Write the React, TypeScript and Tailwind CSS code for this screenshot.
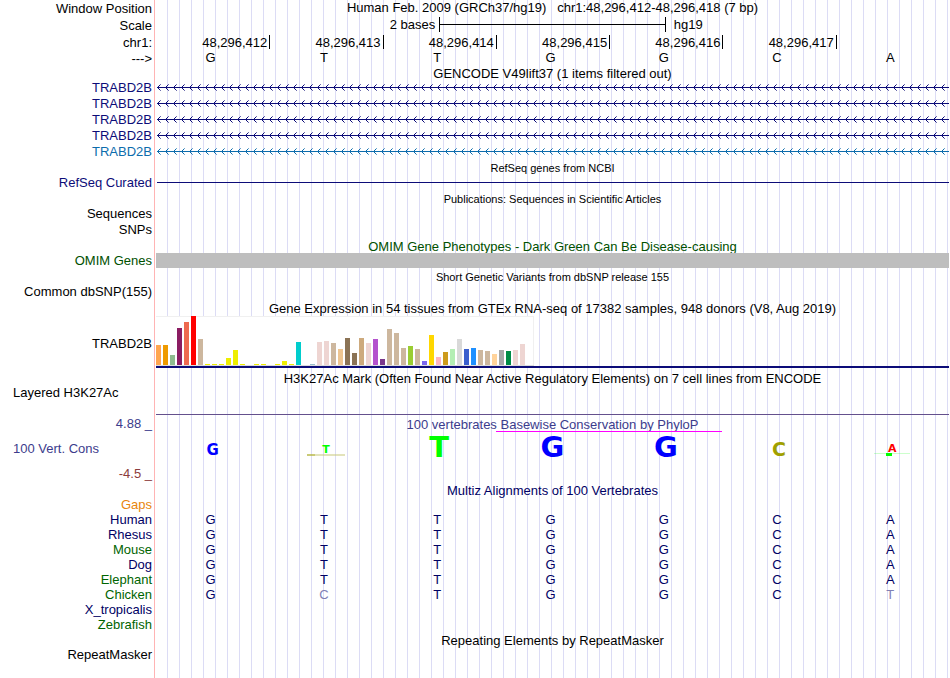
import React from "react";

const BASES = ["G", "T", "T", "G", "G", "C", "A"];

const TICKS = ["48,296,412", "48,296,413", "48,296,414", "48,296,415", "48,296,416", "48,296,417", ""];

// GTEx tissues: colour and bar height in pixels; null is a tissue with no visible bar
const TISSUES: ([string, number] | null)[] = [
  ["#ffa54f", 20], ["#ee9a00", 20], ["#8fbc8f", 10], ["#8b1c62", 37], ["#ee6a50", 43], ["#ff0000", 49],
  ["#cdb79e", 26], ["#eeee00", 1], ["#eeee00", 1], ["#eeee00", 1], ["#eeee00", 7], ["#eeee00", 15],
  ["#eeee00", 1], null, ["#eeee00", 1], ["#eeee00", 1], null, ["#eeee00", 1], ["#eeee00", 4],
  ["#eeee00", 1], ["#00cdcd", 23], null, ["#9ac0cd", 1], ["#eed5d2", 23], ["#eed5d2", 24],
  ["#cdb79e", 22], ["#eec591", 16], ["#8b7355", 27], ["#8b7355", 12], ["#cdaa7d", 27], ["#eed5d2", 22],
  ["#b452cd", 26], ["#7a378b", 6], ["#cdb79e", 36], ["#cdb79e", 32], ["#cdb79e", 17], ["#9acd32", 19],
  ["#cdb79e", 16], ["#7a67ee", 4], ["#ffd700", 30], ["#ffb6c1", 8], ["#cd9b1d", 13], ["#b4eeb4", 16],
  ["#d9d9d9", 26], ["#3a5fcd", 16], ["#1e90ff", 17], ["#cdb79e", 15], ["#cdb79e", 14], ["#ffd39b", 11],
  ["#a6a6a6", 15], ["#008b45", 14], ["#eed5d2", 15], ["#eed5d2", 21], null,
];

const SPECIES = [
  { name: "Gaps", color: "text-[#e8850c]", seq: "" },
  { name: "Human", color: "text-[#000064]", seq: "GTTGGCA" },
  { name: "Rhesus", color: "text-[#000064]", seq: "GTTGGCA" },
  { name: "Mouse", color: "text-[#006400]", seq: "GTTGGCA" },
  { name: "Dog", color: "text-[#000064]", seq: "GTTGGCA" },
  { name: "Elephant", color: "text-[#006400]", seq: "GTTGGCA" },
  { name: "Chicken", color: "text-[#006400]", seq: "GCTGGCT" },
  { name: "X_tropicalis", color: "text-[#000064]", seq: "" },
  { name: "Zebrafish", color: "text-[#006400]", seq: "" },
];

type RowProps = {
  label?: React.ReactNode;
  height?: string;
  labelClass?: string;
  children?: React.ReactNode;
};

function Row({ label, height = "h-4", labelClass = "", children }: RowProps) {
  return (
    <div className={`flex ${height}`}>
      <div className={`flex w-[156px] shrink-0 items-center justify-end whitespace-nowrap pr-1 ${labelClass}`}>
        {label}
      </div>
      <div className="mr-px min-w-0 flex-1">{children}</div>
    </div>
  );
}

function Title({ children, className = "" }: { children: React.ReactNode; className?: string }) {
  return (
    <Row height="h-[15px]">
      <h2 className={`whitespace-pre text-center leading-[17px] ${className}`}>{children}</h2>
    </Row>
  );
}

function Gene({ id, labelClass, color }: { id: string; labelClass: string; color: string }) {
  return (
    <Row label="TRABD2B" labelClass={labelClass}>
      <svg className="block h-4 w-full" shapeRendering="crispEdges" aria-hidden="true">
        <defs>
          <pattern id={id} width="8" height="16" patternUnits="userSpaceOnUse">
            <path d="M1 7h1v1H1zM2 6h1v1H2zM2 8h1v1H2zM3 5h1v1H3zM3 9h1v1H3z" fill={color} />
            <path d="M4 4h1v1H4zM4 10h1v1H4z" fill={color} opacity="0.6" />
          </pattern>
        </defs>
        <rect width="100%" height="16" fill={`url(#${id})`} />
        <rect x="1" y="7" width="100%" height="1" fill={color} />
      </svg>
    </Row>
  );
}

function Bases({ seq, color }: { seq: string[]; color: string }) {
  return (
    <div className={`grid grid-cols-7 leading-[15px] ${color}`}>
      {seq.map((base, i) => (
        <span key={i} className={`pr-1 text-center ${base === BASES[i] ? "" : "text-[#8080b4]"}`}>
          {base}
        </span>
      ))}
    </div>
  );
}

function Logo() {
  const cell = "flex h-[26px] items-end justify-center font-bold";
  const stack = "flex h-[26px] flex-col items-center justify-end pb-0.5 font-bold";
  return (
    <div className="grid grid-cols-7 font-['DejaVu_Sans',sans-serif]">
      <span className={`${cell} text-[15px] leading-[15px] text-[#0000ff]`}>G</span>
      <span className={`${stack} text-[#00ff00]`}>
        <span className="text-[11px] leading-[9px]">T</span>
        <svg className="block h-0.5 w-10" aria-hidden="true">
          <rect x="1" width="8" height="2" fill="#b4b43c" opacity="0.7" />
          <rect x="9" width="30" height="2" fill="#c8c878" opacity="0.5" />
        </svg>
      </span>
      <span className={`${cell} text-[29px] leading-[22px] text-[#00ff00]`}>T</span>
      <span className={`${cell} text-[29px] leading-[22px] text-[#0000ff]`}>G</span>
      <span className={`${cell} text-[29px] leading-[22px] text-[#0000ff]`}>G</span>
      <span className={`${cell} text-[19px] leading-[17px] text-[#a0a000]`}>C</span>
      <span className={`${stack} text-[#ff0000]`}>
        <span className="text-[11px] leading-[9px]">A</span>
        <svg className="block h-[3px] w-10" aria-hidden="true">
          <rect x="2" width="36" height="1" fill="#00ff00" opacity="0.2" />
          <rect x="14" width="6" height="3" fill="#00ff00" />
        </svg>
      </span>
    </div>
  );
}

export default function App() {
  return (
    <main className="relative isolate min-h-screen overflow-hidden bg-white font-['Liberation_Sans',Arial,sans-serif] text-[13px] leading-4 text-black">
      <div className="absolute inset-y-0 left-[154px] right-0 -z-10 border-l border-[#ffb4b4] pl-px">
        <div className="h-full bg-[repeating-linear-gradient(to_right,transparent_0px,transparent_11px,#dcdcf5_11px,#dcdcf5_12px)]" />
      </div>

      <Row label="Window Position" labelClass="pt-0.5">
        <h1 className="whitespace-pre text-center leading-[15px]">
          {"Human Feb. 2009 (GRCh37/hg19)   chr1:48,296,412-48,296,418 (7 bp)"}
        </h1>
      </Row>
      <Row label="Scale" height="h-[17px]" labelClass="pt-0.5">
        <div className="grid h-full grid-cols-14 items-center">
          <span className="col-span-5 pr-1 text-right">2 bases</span>
          <span className="col-span-4 flex h-[15px] items-center border-x border-black">
            <span className="h-px w-full bg-black" />
          </span>
          <span className="col-span-5 pl-2">hg19</span>
        </div>
      </Row>
      <Row label="chr1:" height="h-[17px]" labelClass="pt-0.5">
        <div className="grid h-full grid-cols-7 items-center">
          {TICKS.map((t, i) => (
            <span key={i} className={`h-[14px] pr-0.5 text-right leading-4 ${i ? "border-l border-black" : ""}`}>
              {t}
            </span>
          ))}
        </div>
      </Row>
      <Row label="--->" height="h-[15px]" labelClass="pt-0.5">
        <Bases seq={BASES} color="text-black" />
      </Row>

      <Title>GENCODE V49lift37 (1 items filtered out)</Title>
      <Gene id="gene1" labelClass="text-[#0c0c78]" color="#0c0c78" />
      <Gene id="gene2" labelClass="text-[#0c0c78]" color="#0c0c78" />
      <Gene id="gene3" labelClass="text-[#0c0c78]" color="#0c0c78" />
      <Gene id="gene4" labelClass="text-[#0c0c78]" color="#0c0c78" />
      <Gene id="gene5" labelClass="text-[#0c6cac]" color="#0c6cac" />

      <Title className="text-[11px]">RefSeq genes from NCBI</Title>
      <Row label="RefSeq Curated" labelClass="text-[#0c0c78]">
        <div className="ml-px h-2 border-b border-[#0c0c78]" />
      </Row>

      <Title className="text-[11px]">Publications: Sequences in Scientific Articles</Title>
      <Row label="Sequences" />
      <Row label="SNPs" />

      <Title className="text-[#005000]">OMIM Gene Phenotypes - Dark Green Can Be Disease-causing</Title>
      <Row label="OMIM Genes" labelClass="text-[#005000]">
        <div className="h-[15px] bg-[#bebebe]" />
      </Row>

      <Title className="text-[11px]">Short Genetic Variants from dbSNP release 155</Title>
      <Row label="Common dbSNP(155)" />

      <Title>Gene Expression in 54 tissues from GTEx RNA-seq of 17382 samples, 948 donors (V8, Aug 2019)</Title>
      <Row label="TRABD2B" height="h-[55px]" labelClass="pt-0.5">
        <div className="flex h-[53px] flex-col border-b-2 border-[#0c0c78] pt-px">
          <div className="flex h-[49px] w-[378px] items-end gap-0.5 bg-white shadow-[inset_-1px_1px_0_#f0f0f0]">
            {TISSUES.map((t, i) => (
              <span
                key={i}
                className="w-[5px]"
                style={{ height: t ? t[1] : 0, backgroundColor: t ? t[0] : "transparent" }}
              />
            ))}
          </div>
          <div className="h-px w-[378px] bg-[#dcdcdc]" />
        </div>
      </Row>

      <Title>H3K27Ac Mark (Often Found Near Active Regulatory Elements) on 7 cell lines from ENCODE</Title>
      <div className="flex h-[31px]">
        <div className="w-[156px] shrink-0 pl-[13px] leading-4">Layered H3K27Ac</div>
        <div className="mr-px h-[30px] flex-1 border-b border-[#64508c]" />
      </div>

      <div className="flex h-[66px]">
        <div className="flex w-[156px] shrink-0 flex-col justify-between pb-px pr-1 text-right text-[#3c3c8c]">
          <span className="leading-[15px]">4.88 _</span>
          <span className="pl-[13px] text-left">100 Vert. Cons</span>
          <span className="leading-[15px] text-[#8c3c3c]">-4.5 _</span>
        </div>
        <div className="mr-px min-w-0 flex-1">
          <h2 className="h-[15px] text-center leading-[17px] text-[#3c3c8c]">
            100 vertebrates Basewise Conservation by PhyloP
          </h2>
          <div className="grid grid-cols-7">
            <span className="col-span-2 col-start-4 h-px bg-[#ff00ff]" />
          </div>
          <Logo />
        </div>
      </div>

      <Title className="text-[#000064]">Multiz Alignments of 100 Vertebrates</Title>
      {SPECIES.map((s) => (
        <Row key={s.name} label={s.name} labelClass={s.color} height="h-[15px]">
          <Bases seq={s.seq.split("")} color="text-[#000064]" />
        </Row>
      ))}

      <Title>Repeating Elements by RepeatMasker</Title>
      <Row label="RepeatMasker" />
    </main>
  );
}
